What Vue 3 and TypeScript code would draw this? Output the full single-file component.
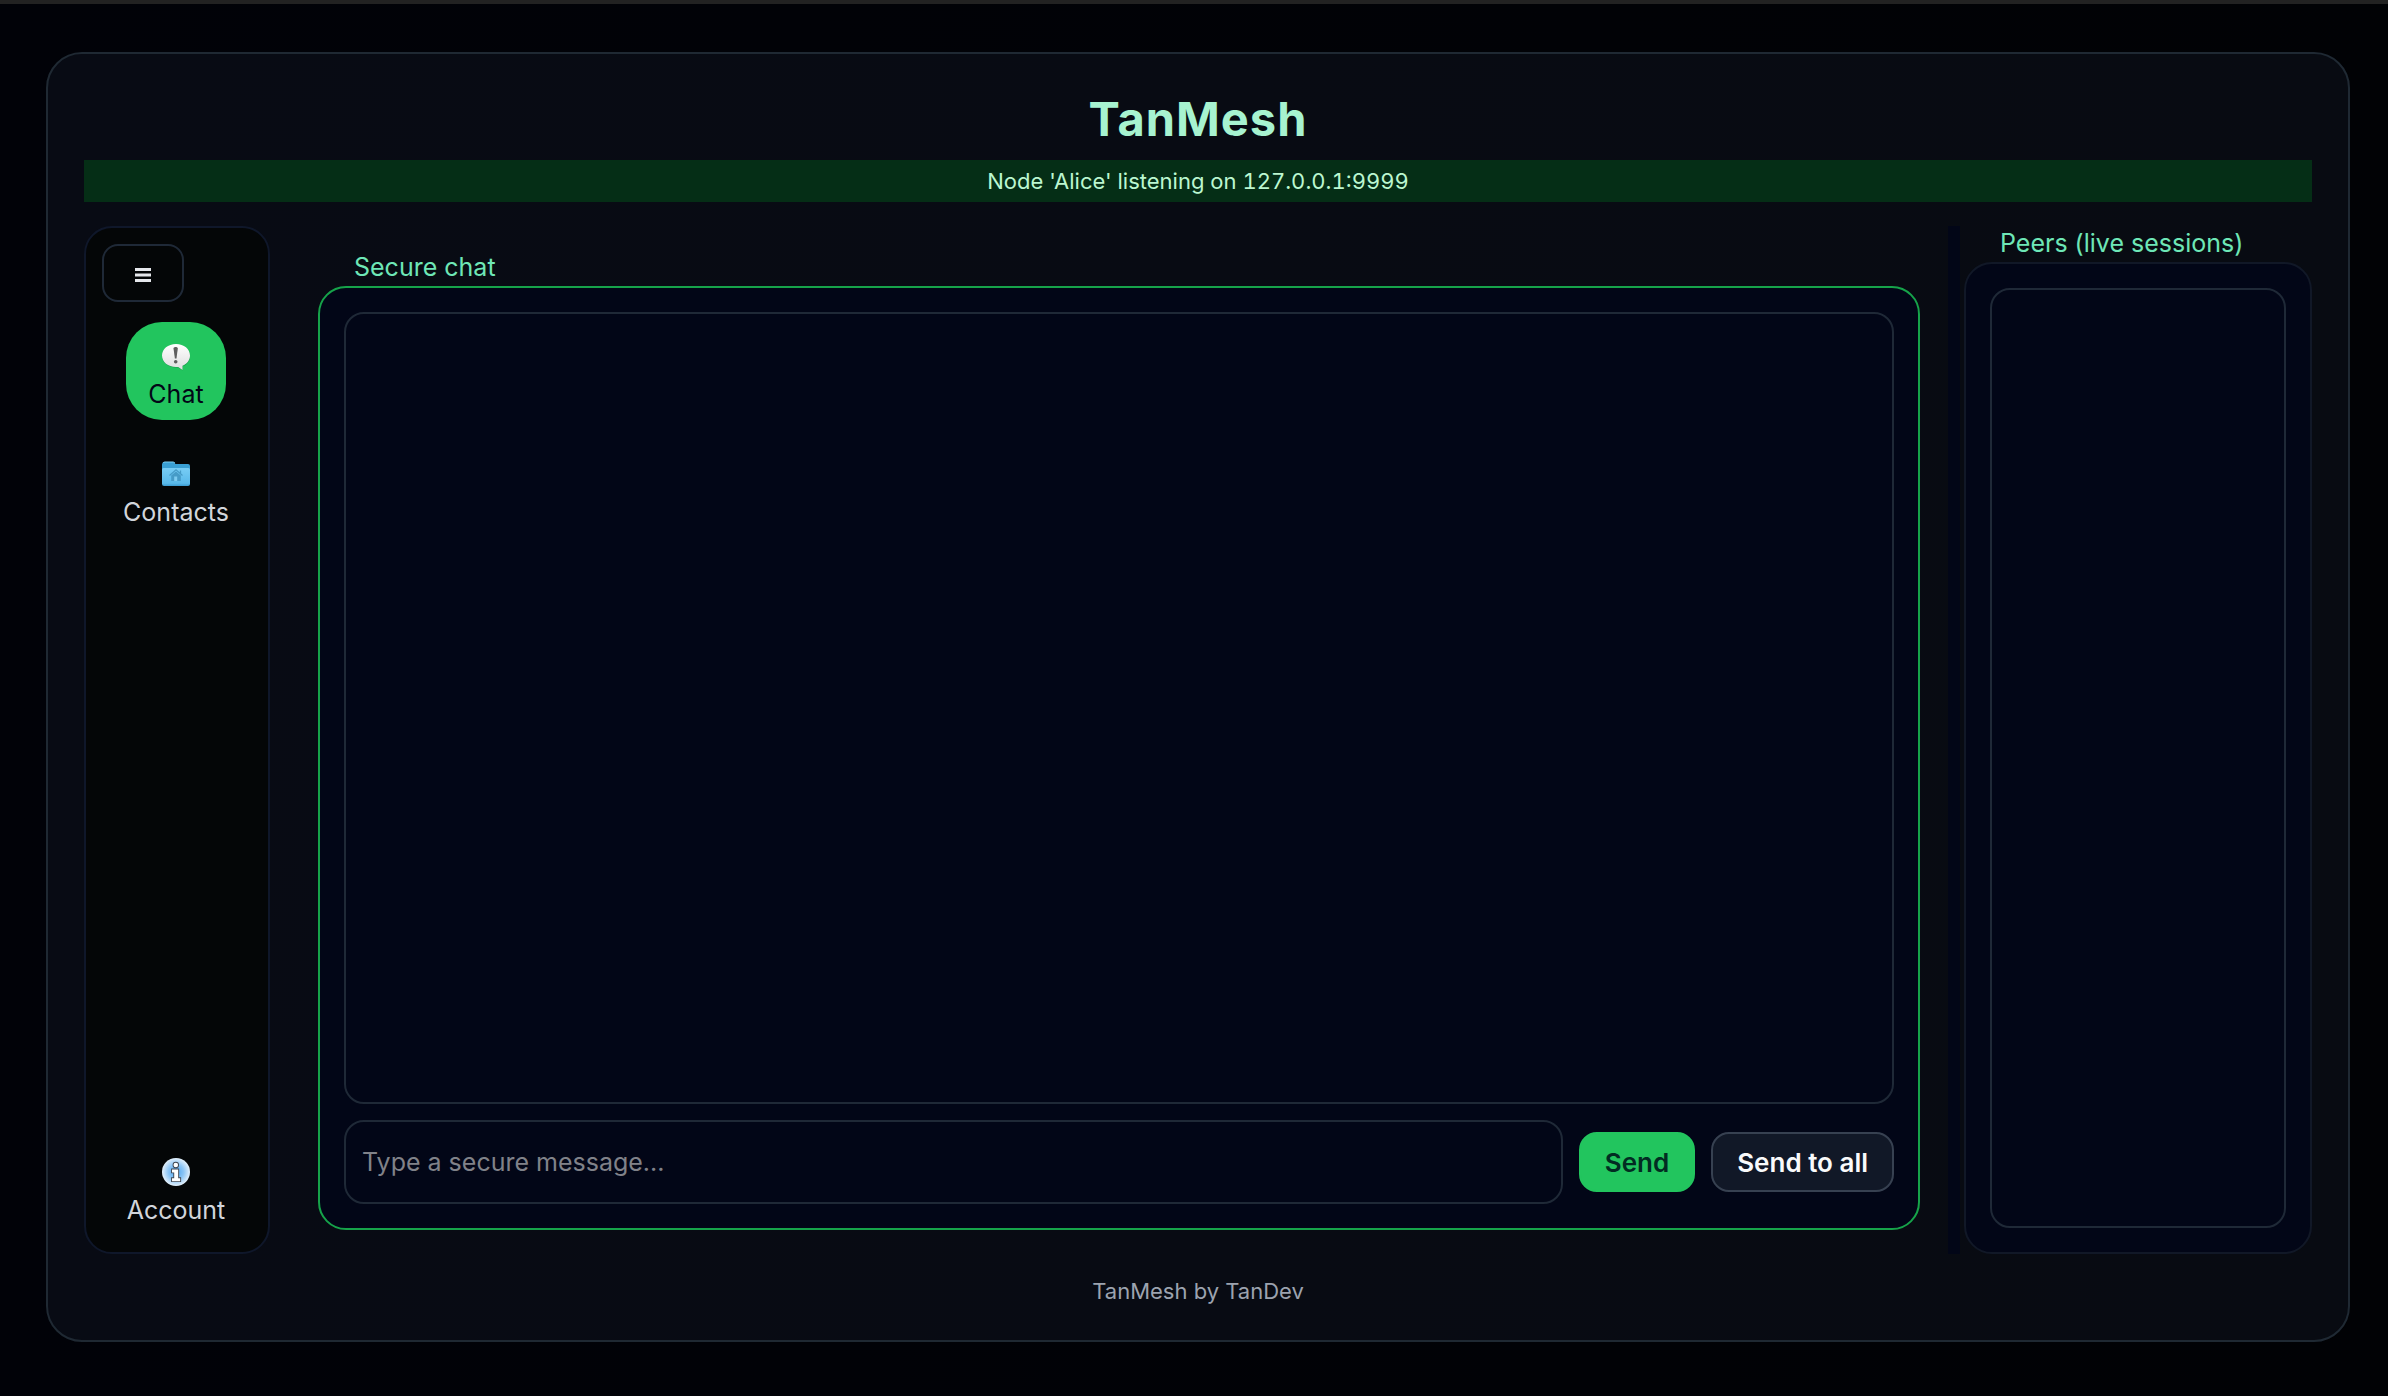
<script setup lang="ts">
import { ref } from 'vue'

type Page = 'chat' | 'contacts' | 'account'

const page = ref<Page>('chat')
const draft = ref('')
const status = "Node 'Alice' listening on 127.0.0.1:9999"
</script>

<template>
  <div class="window">
    <main class="card">
      <h1 class="brand">TanMesh</h1>
      <p class="status" role="status">{{ status }}</p>

      <div class="body">
        <nav class="sidebar" aria-label="Main">
          <button class="menu" type="button" aria-label="Toggle menu">
            <svg width="16" height="14" viewBox="0 0 16 14" aria-hidden="true">
              <path d="M0 1.5h16M0 7h16M0 12.5h16" stroke="#e5e7eb" stroke-width="3" />
            </svg>
          </button>

          <button class="item" :class="{ active: page === 'chat' }" type="button" @click="page = 'chat'">
            <svg class="icon" viewBox="0 0 28 30" aria-hidden="true">
              <defs>
                <linearGradient id="bubble" x1="0" y1="0" x2="0" y2="1">
                  <stop offset="0" stop-color="#ffffff" />
                  <stop offset="1" stop-color="#dedede" />
                </linearGradient>
              </defs>
              <path d="M14 3C6 3 0 7.700 0 14s6 11.500 14 11.500c.8 0 1.500 0 2.200-.1L20.500 28.500V24.600C25 22.800 28 19 28 14.500 28 7.700 22 3 14 3Z" fill="#0b6b30" opacity=".45" />
              <path d="M14 2C6 2 0 7 0 13.500S6 25 14 25c.8 0 1.500 0 2.200-.1L20.500 28V23.800C25 22 28 18.200 28 13.500 28 7 22 2 14 2Z" fill="url(#bubble)" />
              <path d="M11.500 6.500c0-2 4.300-2 4.300 0L14.500 16.500h-1.600Z" fill="#5f5f5f" />
              <circle cx="13.700" cy="19.700" r="1.800" fill="#5f5f5f" />
            </svg>
            <span>Chat</span>
          </button>

          <button class="item" :class="{ active: page === 'contacts' }" type="button" @click="page = 'contacts'">
            <svg class="icon" viewBox="0 0 28 30" aria-hidden="true">
              <defs>
                <linearGradient id="folder" x1="0" y1="0" x2="0" y2="1">
                  <stop offset="0" stop-color="#78cdf5" />
                  <stop offset=".85" stop-color="#59b9ea" />
                  <stop offset="1" stop-color="#3b9bd0" />
                </linearGradient>
              </defs>
              <path d="M0 4.500Q0 2 2 2h9q1.200 0 2.500 2H26q2 0 2 2v6H0Z" fill="#3a9fd3" />
              <path d="M1 3Q1.500 2 3 2h8q1 0 2 1.200" fill="none" stroke="#79cdf2" stroke-width="1" />
              <path d="M0 9.500Q0 8 1.500 8h25q1.500 0 1.500 1.500V24q0 2-2 2H2q-2 0-2-2Z" fill="url(#folder)" />
              <path d="M7.500 15.500 14 9.800l6.500 5.700M18.500 10.500v3" fill="none" stroke="#469bc7" stroke-width="1.300" />
              <path d="M9.200 15.500 14 11.500l4.800 4V21H9.200Z" fill="#469bc7" />
              <path d="M12.200 16.500h3V21h-3Z" fill="#7dcbf0" />
            </svg>
            <span>Contacts</span>
          </button>

          <button class="item last" :class="{ active: page === 'account' }" type="button" @click="page = 'account'">
            <svg class="icon" viewBox="0 0 28 30" aria-hidden="true">
              <defs>
                <radialGradient id="info">
                  <stop offset="0" stop-color="#4ba3ee" />
                  <stop offset=".55" stop-color="#8cc5f5" />
                  <stop offset="1" stop-color="#e3f0fb" />
                </radialGradient>
              </defs>
              <circle cx="14" cy="14" r="14" fill="url(#info)" />
              <g fill="#ffffff" stroke="#3d4550" stroke-width="1.800" paint-order="stroke">
                <circle cx="13.800" cy="7" r="2.300" />
                <path d="M10 11.500h6.200v8.700h2v3H10v-3h2.200v-5.800H10Z" />
              </g>
            </svg>
            <span>Account</span>
          </button>
        </nav>

        <section class="chat" aria-labelledby="chat-title">
          <h2 id="chat-title" class="title">Secure chat</h2>
          <div class="panel focused">
            <div class="log" role="log" aria-label="Messages"></div>
            <form class="composer" @submit.prevent="draft = ''">
              <input v-model="draft" class="field" type="text" aria-label="Message" placeholder="Type a secure message..." />
              <button class="btn primary" type="submit">Send</button>
              <button class="btn" type="button">Send to all</button>
            </form>
          </div>
        </section>

        <div class="splitter" role="separator" aria-orientation="vertical"></div>

        <section class="peers" aria-labelledby="peers-title">
          <h2 id="peers-title" class="title">Peers (live sessions)</h2>
          <div class="panel">
            <div class="log"></div>
          </div>
        </section>
      </div>

      <footer class="footer">TanMesh by TanDev</footer>
    </main>
  </div>
</template>

<style>
body {
  margin: 0;
  background: #010206;
}
</style>

<style scoped>
* {
  box-sizing: border-box;
}

.window {
  display: flex;
  min-height: 100vh;
  padding: 48px 38px 54px 46px;
  border-top: 4px solid #222222;
  background: linear-gradient(90deg, #010208, #010205);
  color: #e5e7eb;
  font-family: Inter, "Liberation Sans", sans-serif;
  font-size: 25px;
}

button,
input {
  margin: 0;
  font: inherit;
  color: inherit;
}

button {
  cursor: pointer;
}

.card {
  display: flex;
  flex: 1;
  flex-direction: column;
  min-width: 0;
  padding: 36px;
  border: 2px solid #1f2933;
  border-radius: 36px;
  background: linear-gradient(90deg, #080b14, #080b12);
}

.brand {
  margin: 0 0 12px;
  color: #a7f3d0;
  font-size: 47px;
  font-weight: 700;
  line-height: 58px;
  letter-spacing: 1px;
  text-align: center;
}

.status {
  margin: 0 0 24px;
  background: #052e16;
  color: #bbf7d0;
  font-size: 22px;
  font-weight: 400;
  font-variant-numeric: tabular-nums;
  line-height: 42px;
  text-align: center;
}

.body {
  display: flex;
  flex: 1;
}

.sidebar {
  display: flex;
  flex-direction: column;
  align-items: center;
  gap: 20px;
  width: 186px;
  padding: 16px 18px 16px 16px;
  border: 2px solid #0f172a;
  border-radius: 28px;
  background: #040607;
}

.menu {
  display: flex;
  align-items: center;
  justify-content: center;
  align-self: flex-start;
  width: 82px;
  height: 58px;
  padding: 4px 0 0;
  border: 2px solid #1f2937;
  border-radius: 16px;
  background: transparent;
}

.item {
  display: flex;
  flex-direction: column;
  align-items: center;
  gap: 5px;
  min-width: 100px;
  padding: 20px 0 9px;
  border: 0;
  border-radius: 36px;
  background: transparent;
  color: #d1d5db;
  line-height: 34px;
}

.item.active {
  background: #22c55e;
  color: #020617;
}

.item.last {
  margin-top: auto;
}

.icon {
  width: 28px;
  height: 30px;
}

.chat {
  display: flex;
  flex: 1;
  flex-direction: column;
  min-width: 0;
  padding: 24px 28px 24px 48px;
}

.splitter {
  width: 12px;
  margin-right: 4px;
  background: #020617;
}

.peers {
  display: flex;
  flex-direction: column;
  width: 348px;
}

.title {
  margin: 0 36px 2px;
  color: #6ee7b7;
  font-size: 25px;
  font-weight: 400;
  line-height: 34px;
}

.panel {
  display: flex;
  flex: 1;
  flex-direction: column;
  gap: 16px;
  padding: 24px;
  border: 2px solid #111827;
  border-radius: 28px;
  background: #020617;
}

.panel.focused {
  border-color: #16a34a;
}

.log {
  flex: 1;
  border: 2px solid #1f2937;
  border-radius: 20px;
}

.composer {
  display: flex;
  align-items: center;
  gap: 16px;
}

.field {
  flex: 1;
  min-width: 0;
  height: 84px;
  padding: 0 16px;
  border: 2px solid #1f2937;
  border-radius: 20px;
  background: transparent;
  outline: none;
}

.field::placeholder {
  color: #808289;
  opacity: 1;
}

.btn {
  height: 60px;
  padding: 0 24px;
  border: 2px solid #374151;
  border-radius: 18px;
  background: #111827;
  color: #f9fafb;
  font-size: 26px;
  font-weight: 600;
}

.btn.primary {
  border-color: #22c55e;
  background: #22c55e;
  color: #022c22;
}

.footer {
  margin-top: 24px;
  color: #9ca3af;
  font-size: 22px;
  line-height: 26px;
  text-align: center;
}
</style>
